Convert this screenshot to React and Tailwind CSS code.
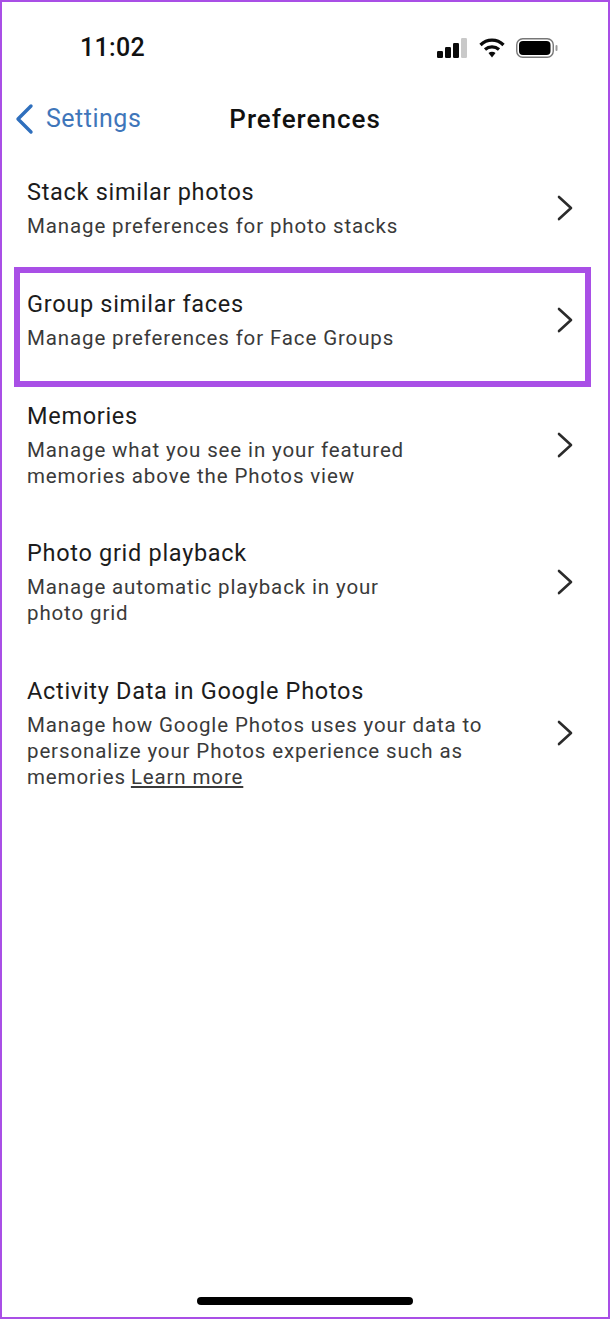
const rows = [
  { title: "Stack similar photos", lines: ["Manage preferences for photo stacks"] },
  { title: "Group similar faces", lines: ["Manage preferences for Face Groups"], highlighted: true },
  { title: "Memories", lines: ["Manage what you see in your featured", "memories above the Photos view"] },
  { title: "Photo grid playback", lines: ["Manage automatic playback in your", "photo grid"], tall: true },
  {
    title: "Activity Data in Google Photos",
    lines: ["Manage how Google Photos uses your data to", "personalize your Photos experience such as", "memories"],
    link: "Learn more",
  },
];

function Chevron() {
  return (
    <svg width="18" height="26" viewBox="0 0 18 26" fill="none" className="shrink-0">
      <path d="M3 2 L15 13 L3 24" stroke="#2b2b2b" strokeWidth="2.6" strokeLinecap="round" strokeLinejoin="round" />
    </svg>
  );
}

function StatusIcons() {
  return (
    <div className="flex items-center gap-[12px]">
      <svg width="30" height="20" viewBox="0 0 30 20">
        <rect x="0" y="13" width="6" height="7" rx="1.2" fill="#0a0a0a" />
        <rect x="8" y="9" width="6" height="11" rx="1.2" fill="#0a0a0a" />
        <rect x="16" y="5" width="6" height="15" rx="1.2" fill="#0a0a0a" />
        <rect x="24" y="0" width="6" height="20" rx="1.2" fill="#c9c9c9" />
      </svg>
      <svg width="26" height="20" viewBox="0 0 26 20" fill="none">
        <path d="M1.5 7 C8 0.5 18 0.5 24.5 7" stroke="#0a0a0a" strokeWidth="3.2" />
        <path d="M6 11.5 C10 8 16 8 20 11.5" stroke="#0a0a0a" strokeWidth="3.2" />
        <path d="M9.5 15 L13 19.5 L16.5 15 C14.5 13.4 11.5 13.4 9.5 15 Z" fill="#0a0a0a" />
      </svg>
      <svg width="42" height="20" viewBox="0 0 42 20" fill="none" className="ml-[-1px]">
        <rect x="0.75" y="0.75" width="36.5" height="18.5" rx="6" stroke="#777" strokeWidth="1.4" />
        <rect x="3" y="3" width="31.5" height="14" rx="4" fill="#000" />
        <rect x="39.5" y="7" width="2" height="6" rx="1" fill="#999" />
      </svg>
    </div>
  );
}

function Row({ title, lines, link, highlighted, tall }) {
  return (
    <div className={`relative flex items-center justify-between pl-[25px] pr-[34px] ${tall ? "min-h-[138px]" : "min-h-[112px]"}`}>
      <div className="self-start pt-[27px] pb-[24px]">
        <div className="text-[23.5px] leading-[26px] tracking-[0.7px] text-[#1c1c1c]">{title}</div>
        <div className="mt-[8px] text-[20.5px] leading-[26px] tracking-[0.87px] text-[#3a3a3a]">
          {lines.map((line, i) => (
            <div key={line}>
              {line}
              {link && i === lines.length - 1 && <span className="ml-[5px] underline underline-offset-2">{link}</span>}
            </div>
          ))}
        </div>
      </div>
      <Chevron />
      {highlighted && (
        <div className="absolute left-[12px] top-[3px] h-[120px] w-[577px] border-[6px] border-[#a94fe6]" />
      )}
    </div>
  );
}

export default function App() {
  return (
    <div className="h-[1319px] w-[610px] flex flex-col border-2 border-[#a94fe6] bg-white font-['Roboto',sans-serif]">
      {/* Status bar */}
      <div className="flex h-[60px] items-center justify-between pt-[31px] pl-[78px] pr-[50px]">
        <span className="text-[25px] leading-[30px] font-medium tracking-[0.3px] text-[#111]">11:02</span>
        <StatusIcons />
      </div>

      {/* Nav */}
      <div className="relative flex h-[90px] items-center pt-[24px] pl-[12px]">
        <svg width="20" height="32" viewBox="0 0 20 32" fill="none" className="mt-[-1px]">
          <path d="M17 3 L4 16 L17 29" stroke="#2f6fbd" strokeWidth="3.4" strokeLinecap="round" strokeLinejoin="round" />
        </svg>
        <span className="ml-[12px] text-[25px] tracking-[0.5px] text-[#3f76ba]">Settings</span>
        <span className="ml-[88px] text-[26px] font-medium tracking-[1px] text-[#111]">Preferences</span>
      </div>

      {/* Rows */}
      <div className="flex flex-col">
        {rows.map((row) => (
          <Row key={row.title} {...row} />
        ))}
      </div>

      {/* Home indicator */}
      <div className="mt-auto flex justify-center pb-[12px]">
        <div className="h-[8px] w-[216px] rounded-full bg-black" />
      </div>
    </div>
  );
}
